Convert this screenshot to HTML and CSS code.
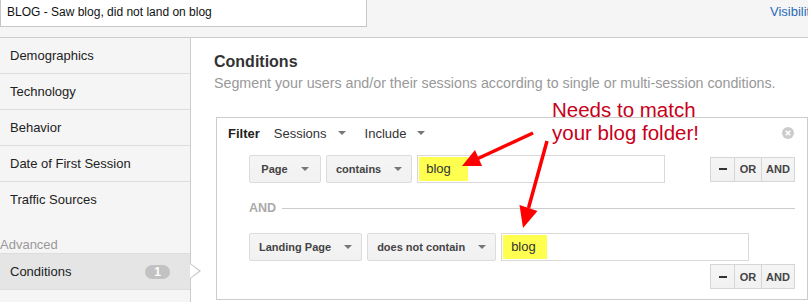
FILE: index.html
```html
<!doctype html>
<html lang="en">
<head>
    <meta charset="UTF-8">
    <title>Segment Conditions</title>
    <link rel="stylesheet" href="styles.css">
</head>
<body>
    <div class="page">
        <header class="segBar">
            <div class="segName">BLOG - Saw blog, did not land on blog</div>
            <a class="segVisibility" href="#">Visibility</a>
        </header>

        <div class="segEditor">
            <nav class="segNav">
                <div class="navItem">Demographics</div>
                <div class="navItem">Technology</div>
                <div class="navItem">Behavior</div>
                <div class="navItem">Date of First Session</div>
                <div class="navItem navLast">Traffic Sources</div>
                <div class="navGroup">Advanced</div>
                <div class="navItem navActive">Conditions <span class="navCount">1</span></div>
            </nav>

            <section class="segMain">
                <h2 class="condTitle">Conditions</h2>
                <p class="condHint">Segment your users and/or their sessions according to single or multi-session conditions.</p>

                <div class="filterBox">
                    <div class="filterHead">
                        <b class="filterLabel">Filter</b>
                        <span class="dropText">Sessions <i class="caret"></i></span>
                        <span class="dropText">Include <i class="caret"></i></span>
                        <span class="filterClose">
                            <svg width="12" height="12" viewBox="0 0 12 12"><circle cx="6" cy="6" r="6" fill="#ccc"/><path d="M3.8 3.8l4.4 4.4M8.2 3.8l-4.4 4.4" stroke="#fff" stroke-width="1.6"/></svg>
                        </span>
                    </div>

                    <div class="ruleRow">
                        <button class="selBtn">Page <i class="caret"></i></button>
                        <button class="selBtn">contains <i class="caret"></i></button>
                        <div class="ruleValue"><span class="mark">blog</span></div>
                        <div class="ruleOps">
                            <button class="opBtn opMinus"><i class="minus"></i></button>
                            <button class="opBtn opOr">OR</button>
                            <button class="opBtn opAnd">AND</button>
                        </div>
                    </div>

                    <div class="ruleJoin">AND</div>

                    <div class="ruleRow ruleRowSecond">
                        <button class="selBtn">Landing Page <i class="caret"></i></button>
                        <button class="selBtn">does not contain <i class="caret"></i></button>
                        <div class="ruleValue"><span class="mark markWide">blog</span></div>
                    </div>
                    <div class="ruleActions">
                        <div class="ruleOps">
                            <button class="opBtn opMinus"><i class="minus"></i></button>
                            <button class="opBtn opOr">OR</button>
                            <button class="opBtn opAnd">AND</button>
                        </div>
                    </div>
                </div>
            </section>
        </div>

        <!-- red annotation drawn over the screenshot -->
        <div class="note">Needs to match<br>your blog folder!</div>
        <svg class="noteArrows" width="808" height="302" viewBox="0 0 808 302">
            <line x1="533" y1="133" x2="478" y2="158.5" stroke="#f00" stroke-width="3.5"/>
            <polygon points="462,166 482,166 475,150" fill="#f00"/>
            <line x1="547" y1="141" x2="528.5" y2="208" stroke="#f00" stroke-width="3.5"/>
            <polygon points="523,228 537.5,211 519.5,205" fill="#f00"/>
        </svg>
    </div>
</body>
</html>
```

FILE: styles.css
```css
* {
    box-sizing: border-box;
}

body {
    margin: 0;
    background: #fff;
    font-family: "Liberation Sans", Arial, sans-serif;
    color: #222;
    overflow: hidden;
}

.page {
    position: relative;
    width: 808px;
    height: 302px;
    overflow: hidden;
}

/* top bar */
.segBar {
    display: flex;
    align-items: flex-start;
    height: 38px;
    background: #f5f5f5;
    border-bottom: 1px solid #ccc;
}

.segName {
    flex: none;
    width: 367px;
    height: 27px;
    padding: 0 6px;
    background: #fff;
    border: 1px solid #c6c6c6;
    border-top: 0;
    font-size: 12px;
    line-height: 24px;
    color: #111;
}

.segVisibility {
    margin: 4px 0 0 403px;
    font-size: 13px;
    line-height: 16px;
    color: #2a6bb5;
    text-decoration: none;
    white-space: nowrap;
}

/* editor */
.segEditor {
    display: flex;
    height: 264px;
}

.segNav {
    flex: none;
    width: 191px;
    background: #f5f5f5;
    border-right: 1px solid #ccc;
    font-size: 13px;
}

.navItem {
    height: 36px;
    padding-left: 10px;
    line-height: 35px;
    border-bottom: 1px solid #ddd;
}

.navLast {
    height: 35px;
    border-bottom: 0;
}

.navGroup {
    margin-top: 20px;
    line-height: 16px;
    color: #999;
}

.navActive {
    position: relative;
    display: flex;
    justify-content: space-between;
    align-items: center;
    height: 37px;
    padding-right: 20px;
    background: #e5e5e5;
    border-top: 1px solid #ddd;
}

.navActive::before,
.navActive::after {
    content: "";
    position: absolute;
    left: 190px;
    width: 0;
    height: 0;
}

.navActive::before {
    top: 9px;
    border-left: 11px solid #c6c6c6;
    border-top: 8px solid transparent;
    border-bottom: 8px solid transparent;
}

.navActive::after {
    top: 10px;
    border-left: 9px solid #fff;
    border-top: 7px solid transparent;
    border-bottom: 7px solid transparent;
}

.navCount {
    width: 25px;
    height: 14px;
    border-radius: 7px;
    background: #c2c2c2;
    color: #fff;
    font-size: 12px;
    font-weight: bold;
    line-height: 14px;
    text-align: center;
}

.segMain {
    flex: 1;
    padding: 14px 0 0 23px;
}

.condTitle {
    margin: 0;
    font-size: 16px;
    line-height: 20px;
    color: #333;
}

.condHint {
    margin: 2px 0 0;
    font-size: 14.25px;
    line-height: 18px;
    color: #999;
    white-space: nowrap;
}

/* filter box */
.filterBox {
    margin: 25px 0 0 2px;
    padding: 6px 12px 10px 11px;
    border: 1px solid #ccc;
}

.filterHead {
    display: flex;
    align-items: center;
    height: 18px;
    font-size: 13px;
}

.filterLabel {
    margin-right: 14px;
    color: #222;
}

.dropText {
    display: inline-flex;
    align-items: center;
    gap: 11px;
    margin-right: 19px;
    color: #333;
}

.filterClose {
    display: flex;
    margin-left: auto;
    margin-right: 1px;
}

.caret {
    display: inline-block;
    width: 0;
    height: 0;
    border-left: 4px solid transparent;
    border-right: 4px solid transparent;
    border-top: 4px solid #777;
}

.ruleRow {
    display: flex;
    gap: 5px;
    height: 28px;
    margin: 13px 0 0 21px;
}

.ruleRowSecond {
    margin-top: 17px;
}

.selBtn {
    display: inline-flex;
    align-items: center;
    justify-content: center;
    gap: 13px;
    min-width: 72px;
    height: 28px;
    padding: 0 9px;
    border: 1px solid #dcdcdc;
    border-radius: 2px;
    background: linear-gradient(#f5f5f5, #f1f1f1);
    font-family: "Liberation Sans", Arial, sans-serif;
    font-size: 11px;
    font-weight: bold;
    color: #444;
    white-space: nowrap;
}

.ruleValue {
    display: flex;
    width: 248px;
    height: 28px;
    padding: 1px;
    border: 1px solid #d9d9d9;
    background: #fff;
}

.mark {
    padding: 0 17px 0 7px;
    background: #ffff50;
    font-size: 13px;
    line-height: 24px;
    color: #333;
}

.markWide {
    padding: 0 11px 0 8px;
}

.ruleOps {
    display: flex;
    align-self: center;
    height: 25px;
    margin-left: auto;
}

.opBtn {
    display: flex;
    align-items: center;
    justify-content: center;
    height: 25px;
    padding: 0;
    border: 1px solid #d6d6d6;
    background: linear-gradient(#f5f5f5, #f1f1f1);
    font-family: "Liberation Sans", Arial, sans-serif;
    font-size: 11px;
    font-weight: bold;
    color: #444;
}

.opBtn + .opBtn {
    margin-left: -1px;
}

.opMinus {
    width: 25px;
}

.opOr {
    width: 28px;
}

.opAnd {
    width: 34px;
}

.minus {
    display: block;
    width: 8px;
    height: 2px;
    background: #333;
}

.ruleJoin {
    display: flex;
    align-items: center;
    gap: 6px;
    margin: 17px 0 0 21px;
    font-size: 12.5px;
    font-weight: bold;
    line-height: 16px;
    color: #aaa;
}

.ruleJoin::after {
    content: "";
    flex: 1;
    height: 1px;
    background: #ccc;
}

.ruleActions {
    display: flex;
    justify-content: flex-end;
    margin-top: 3px;
}

/* annotation */
.note {
    position: absolute;
    left: 552px;
    top: 98px;
    font-size: 20.5px;
    line-height: 23px;
    color: #c8001a;
}

.noteArrows {
    position: absolute;
    left: 0;
    top: 0;
    pointer-events: none;
}
```
